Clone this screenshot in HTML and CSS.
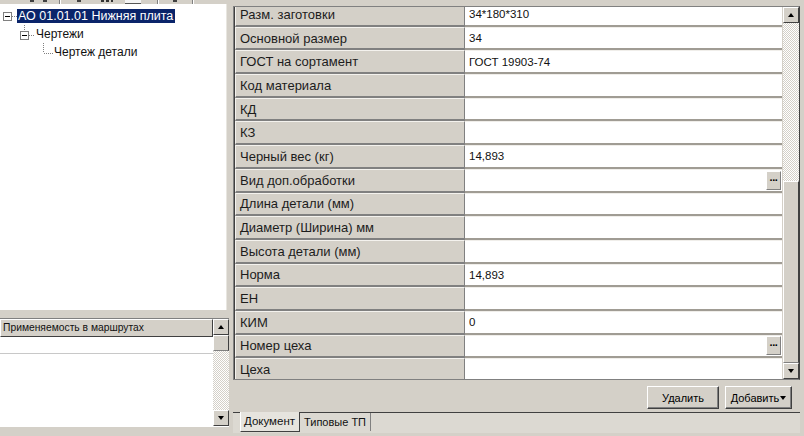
FILE: index.html
```html
<!DOCTYPE html>
<html lang="ru">
<head>
  <meta charset="UTF-8">
  <title>Карточка детали</title>
  <link rel="stylesheet" href="styles.css">
</head>
<body>

<div class="toolbar">
  <span class="tb-mark" style="margin-left:30px"></span>
  <span class="tb-mark" style="margin-left:9px"></span>
  <span class="tb-sep" style="margin-left:12px"></span>
  <span class="tb-mark" style="margin-left:16px"></span>
  <span class="tb-mark wide" style="margin-left:20px"></span>
  <span class="tb-box" style="margin-left:12px"></span>
  <span class="tb-sep" style="margin-left:16px"></span>
  <span class="tb-mark" style="margin-left:14px"></span>
  <span class="tb-sep" style="margin-left:15px"></span>
</div>

<div class="workspace">

  <aside class="left">
    <div class="tree">
      <div class="tree-row">
        <svg class="tree-glyph" width="17" height="18" viewBox="0 0 17 18">
          <rect x="3.5" y="5.5" width="8" height="8" fill="#fff" stroke="#808080"/>
          <line x1="5" y1="9.5" x2="10" y2="9.5" stroke="#000"/>
          <line x1="12" y1="9.5" x2="17" y2="9.5" stroke="#808080" stroke-dasharray="1 1"/>
        </svg>
        <span class="tree-text selected">АО 01.01.01 Нижняя плита</span>
      </div>
      <div class="tree-row">
        <svg class="tree-glyph" width="35" height="18" viewBox="0 0 35 18">
          <line x1="24.5" y1="0" x2="24.5" y2="6" stroke="#808080" stroke-dasharray="1 1"/>
          <rect x="20.5" y="6.5" width="8" height="8" fill="#fff" stroke="#808080"/>
          <line x1="22" y1="10.5" x2="27" y2="10.5" stroke="#000"/>
          <line x1="29" y1="10.5" x2="35" y2="10.5" stroke="#808080" stroke-dasharray="1 1"/>
        </svg>
        <span class="tree-text">Чертежи</span>
      </div>
      <div class="tree-row">
        <svg class="tree-glyph" width="53" height="18" viewBox="0 0 53 18">
          <line x1="43.5" y1="0" x2="43.5" y2="10" stroke="#808080" stroke-dasharray="1 1"/>
          <line x1="44" y1="10.5" x2="53" y2="10.5" stroke="#808080" stroke-dasharray="1 1"/>
        </svg>
        <span class="tree-text">Чертеж детали</span>
      </div>
    </div>

    <div class="hsplit"></div>

    <div class="usage">
      <div class="usage-list">
        <div class="usage-head">Применяемость в маршрутах</div>
        <div class="usage-row"></div>
      </div>
      <div class="vscroll">
        <div class="sb-btn"><span class="arrow-up"></span></div>
        <div class="sb-thumb small"></div>
        <div class="sb-track"></div>
        <div class="sb-btn"><span class="arrow-down"></span></div>
      </div>
    </div>
  </aside>

  <div class="vsplit"></div>

  <section class="right">
    <div class="props-box">
      <div class="props">
        <div class="prop-row"><div class="prop-label">Разм. заготовки</div><div class="prop-value">34*180*310</div></div>
        <div class="prop-row"><div class="prop-label">Основной размер</div><div class="prop-value">34</div></div>
        <div class="prop-row"><div class="prop-label">ГОСТ на сортамент</div><div class="prop-value">ГОСТ 19903-74</div></div>
        <div class="prop-row"><div class="prop-label">Код материала</div><div class="prop-value"></div></div>
        <div class="prop-row"><div class="prop-label">КД</div><div class="prop-value"></div></div>
        <div class="prop-row"><div class="prop-label">КЗ</div><div class="prop-value"></div></div>
        <div class="prop-row"><div class="prop-label">Черный вес (кг)</div><div class="prop-value">14,893</div></div>
        <div class="prop-row"><div class="prop-label">Вид доп.обработки</div><div class="prop-value"><span></span><button class="ellipsis">···</button></div></div>
        <div class="prop-row"><div class="prop-label">Длина детали (мм)</div><div class="prop-value"></div></div>
        <div class="prop-row"><div class="prop-label">Диаметр (Ширина) мм</div><div class="prop-value"></div></div>
        <div class="prop-row"><div class="prop-label">Высота детали (мм)</div><div class="prop-value"></div></div>
        <div class="prop-row"><div class="prop-label">Норма</div><div class="prop-value">14,893</div></div>
        <div class="prop-row"><div class="prop-label">ЕН</div><div class="prop-value"></div></div>
        <div class="prop-row"><div class="prop-label">КИМ</div><div class="prop-value">0</div></div>
        <div class="prop-row"><div class="prop-label">Номер цеха</div><div class="prop-value"><span></span><button class="ellipsis">···</button></div></div>
        <div class="prop-row"><div class="prop-label">Цеха</div><div class="prop-value"></div></div>
      </div>
      <div class="vscroll big">
        <div class="sb-btn"><span class="arrow-up"></span></div>
        <div class="sb-track"></div>
        <div class="sb-thumb"></div>
        <div class="sb-btn"><span class="arrow-down"></span></div>
      </div>
    </div>

    <div class="actions">
      <button class="btn del">Удалить</button>
      <button class="btn add">Добавить <span class="arrow-down"></span></button>
    </div>

    <div class="tabs">
      <div class="tab active">Документ</div>
      <div class="tab">Типовые ТП</div>
    </div>
  </section>

</div>

</body>
</html>
```

FILE: styles.css
```css
body {
  margin: 0;
  width: 804px;
  height: 436px;
  overflow: hidden;
  background: #d4d0c8;
  font-family: 'Liberation Sans', Arial, sans-serif;
  font-size: 12px;
  color: #111;
}
.toolbar {
  height: 4px;
  display: flex;
  align-items: flex-start;
  overflow: hidden;
}
.tb-mark {
  width: 4px;
  height: 2px;
  background: #404040;
}
.tb-mark.wide {
  width: 12px;
  background: repeating-linear-gradient(90deg, #333 0 3px, transparent 3px 5px);
}
.tb-box {
  width: 16px;
  height: 3px;
  background: #f4f4f4;
  border-bottom: 1px solid #555;
}
.tb-sep {
  width: 1px;
  height: 4px;
  background: #808080;
  border-right: 1px solid #fff;
}
.workspace {
  display: flex;
  height: 432px;
}

/* left side */
.left {
  width: 229px;
  display: flex;
  flex-direction: column;
}
.tree {
  height: 306px;
  width: 227px;
  background: #fff;
  border-right: 1px solid #e8e6e0;
  padding-top: 3px;
  box-sizing: border-box;
}
.tree-row {
  height: 18px;
  display: flex;
  align-items: center;
}
.tree-glyph {
  flex: none;
}
.tree-text {
  padding: 0 2px 0 1px;
  line-height: 14px;
  white-space: nowrap;
}
.tree-text.selected {
  background: #0a246a;
  color: #fff;
  font-size: 12.5px;
}
.hsplit {
  height: 8px;
}
.usage {
  height: 107px;
  display: flex;
  border-top: 1px solid #808080;
  border-bottom: 1px solid #fff;
}
.usage-list {
  width: 214px;
  background: #fff;
}
.usage-head {
  height: 16px;
  line-height: 16px;
  font-size: 10.3px;
  padding-left: 2px;
  background: #d4d0c8;
  border-top: 1px solid #fff;
  border-left: 1px solid #fff;
  border-bottom: 1px solid #404040;
  border-right: 1px solid #404040;
  white-space: nowrap;
}
.usage-row {
  height: 16px;
  border-bottom: 1px solid #c8c8c8;
}

/* scrollbars */
.vscroll {
  width: 16px;
  display: flex;
  flex-direction: column;
}
.sb-btn {
  height: 16px;
  box-sizing: border-box;
  background: #d4d0c8;
  border-top: 1px solid #fff;
  border-left: 1px solid #fff;
  border-right: 1px solid #404040;
  border-bottom: 1px solid #404040;
  display: flex;
  align-items: center;
  justify-content: center;
  flex: none;
}
.sb-track {
  flex: 1;
  background: repeating-conic-gradient(#fff 0 25%, #d4d0c8 0 50%) 0 0 / 2px 2px;
}
.sb-thumb {
  height: 182px;
  flex: none;
  box-sizing: border-box;
  background: #d4d0c8;
  border-top: 1px solid #fff;
  border-left: 1px solid #fff;
  border-right: 1px solid #404040;
  border-bottom: 1px solid #808080;
}
.sb-thumb.small {
  height: 16px;
}
.arrow-up,
.arrow-down {
  display: inline-block;
  width: 0;
  height: 0;
  border-left: 3.5px solid transparent;
  border-right: 3.5px solid transparent;
}
.arrow-up {
  border-bottom: 4px solid #000;
}
.arrow-down {
  border-top: 4px solid #000;
}

/* separator between panes */
.vsplit {
  width: 4px;
}

/* right side */
.right {
  flex: 1;
  display: flex;
  flex-direction: column;
  padding-right: 4px;
  padding-top: 2px;
}
.props-box {
  height: 374px;
  display: flex;
  border: 1px solid #808080;
  border-right-color: #404040;
  box-shadow: inset 1px 1px 0 #404040;
  box-sizing: border-box;
  background: #fff;
}
.props {
  flex: 1;
  overflow: hidden;
  padding-left: 1px;
  padding-top: 1px;
}
.prop-row {
  height: 23.7px;
  display: grid;
  grid-template-columns: 230px 1fr;
  box-sizing: border-box;
}
.prop-row:first-child {
  margin-top: -5px;
}
.prop-label {
  background: #d4d0c8;
  border-top: 1px solid #f4f2ee;
  border-left: 1px solid #f4f2ee;
  border-bottom: 2px solid #808080;
  border-right: 1px solid #808080;
  font-size: 13px;
  color: #1c1c1c;
  padding-left: 4px;
  display: flex;
  align-items: center;
  white-space: nowrap;
}
.prop-value {
  background: #fff;
  border-top: 1px solid #f0eeea;
  border-bottom: 2px solid #a09c94;
  font-size: 11.5px;
  padding-left: 4px;
  display: flex;
  align-items: center;
  justify-content: space-between;
  white-space: nowrap;
}
.ellipsis {
  width: 15px;
  height: 19px;
  margin: 0 1px 0 0;
  padding: 0;
  background: #d4d0c8;
  border: none;
  border-top: 1px solid #fff;
  border-left: 1px solid #fff;
  border-right: 1px solid #808080;
  border-bottom: 1px solid #808080;
  font-family: inherit;
  font-size: 11px;
  font-weight: bold;
  letter-spacing: -1px;
  line-height: 17px;
}
.vscroll.big {
  width: 16px;
  border-left: 1px solid #d4d0c8;
}
.actions {
  height: 30px;
  display: flex;
  justify-content: flex-end;
  align-items: flex-start;
  gap: 6px;
  padding-top: 6px;
  padding-right: 8px;
  box-sizing: border-box;
}
.btn {
  height: 23px;
  padding: 0;
  background: #d4d0c8;
  border: none;
  border-top: 1px solid #fff;
  border-left: 1px solid #fff;
  border-right: 1px solid #404040;
  border-bottom: 1px solid #404040;
  box-shadow: inset -1px -1px 0 #808080;
  font-family: inherit;
  font-size: 11px;
  color: #000;
}
.btn.del {
  width: 72px;
}
.btn.add {
  width: 67px;
}
.btn .arrow-down {
  vertical-align: 2px;
  margin-left: -2px;
}
.tabs {
  display: flex;
  margin-top: 2px;
  padding-left: 7px;
  height: 20px;
  border-top: 1px solid #404040;
  background: #dcd9d2;
}
.tab {
  height: 18px;
  line-height: 18px;
  padding: 0 4px;
  font-size: 11px;
  border-right: 1px solid #808080;
}
.tab.active {
  width: 52px;
  padding: 0 3px;
  margin-top: -1px;
  height: 19px;
  font-size: 11.5px;
  background: #e6e4de;
  border-left: 1px solid #fff;
  border-right: 1px solid #404040;
  border-bottom: 1px solid #404040;
}
```
